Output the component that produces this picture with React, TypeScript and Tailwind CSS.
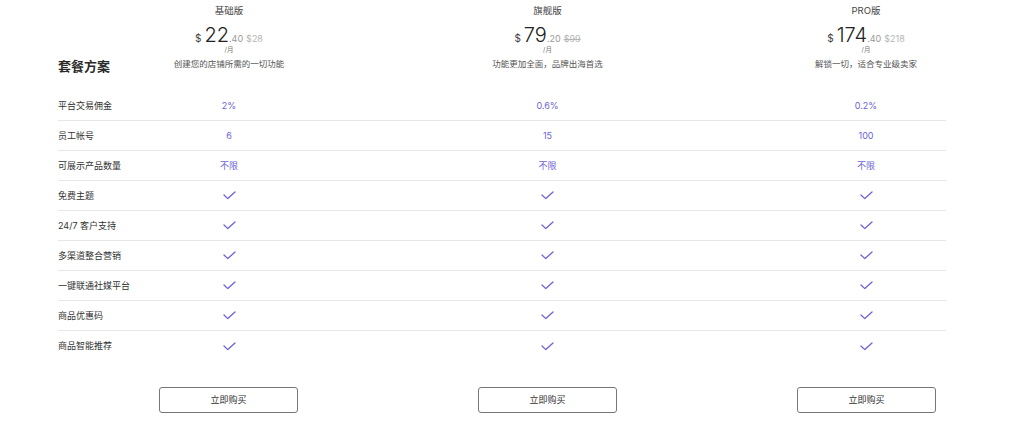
type Plan = {
  name: string;
  price: string;
  cents: string;
  was: string;
  struck: boolean;
  desc: string;
};

const plans: Plan[] = [
  { name: "基础版", price: "22", cents: ".40", was: "$28", struck: false, desc: "创建您的店铺所需的一切功能" },
  { name: "旗舰版", price: "79", cents: ".20", was: "$99", struck: true, desc: "功能更加全面，品牌出海首选" },
  { name: "PRO版", price: "174", cents: ".40", was: "$218", struck: false, desc: "解锁一切，适合专业级卖家" },
];

const rows: { label: string; values: string[] | null }[] = [
  { label: "平台交易佣金", values: ["2%", "0.6%", "0.2%"] },
  { label: "员工帐号", values: ["6", "15", "100"] },
  { label: "可展示产品数量", values: ["不限", "不限", "不限"] },
  { label: "免费主题", values: null },
  { label: "24/7 客户支持", values: null },
  { label: "多渠道整合营销", values: null },
  { label: "一键联通社媒平台", values: null },
  { label: "商品优惠码", values: null },
  { label: "商品智能推荐", values: null },
];

const font = { fontFamily: "Inter, 'Noto Sans CJK SC', sans-serif" };

const Tick = () => (
  <svg width="13" height="9" viewBox="0 0 13 9" fill="none">
    <polyline points="1,4 4.8,7.6 12,1" stroke="#6c63d8" strokeWidth="1.3" strokeLinecap="round" strokeLinejoin="round" />
  </svg>
);

const App = () => {
  return (
    <div className="w-[1024px] h-[424px] bg-white text-[#333]" style={font}>
      <div className="ml-[58px] w-[888px]">
        {/* header */}
        <div className="flex h-[91px]">
          <div className="w-[102px] pt-[57px]">
            <h2 className="text-[13px] font-semibold leading-[18px] text-[#2a2a2a]">套餐方案</h2>
          </div>
          <div className="flex-1 flex justify-between pr-[11px]">
            {plans.map((p) => (
              <div key={p.name} className="w-[138px] flex flex-col items-center pt-[5px] whitespace-nowrap">
                <div className="text-[9.5px] leading-[12px] text-[#444]">{p.name}</div>
                <div className="flex items-baseline mt-[8px] leading-[20px]">
                  <span className="text-[10px] text-[#444] mr-[3px]">$</span>
                  <span className="text-[20px] font-light text-[#222]">{p.price}</span>
                  <span className="text-[9px] text-[#999]">{p.cents}</span>
                  <span className={`text-[9px] text-[#b5b5b5] ml-[3px] ${p.struck ? "line-through" : ""}`}>{p.was}</span>
                </div>
                <div className="text-[6.5px] leading-[8px] text-[#777] -mt-[3px]">/月</div>
                <div className="text-[8.5px] leading-[12px] text-[#555] mt-[4px]">{p.desc}</div>
              </div>
            ))}
          </div>
        </div>

        {/* feature rows */}
        <div>
          {rows.map((r, i) => (
            <div
              key={r.label}
              className={`flex items-center h-[30px] ${i < rows.length - 1 ? "border-b border-[#e6e6e6]" : ""}`}
            >
              <div className="w-[102px] text-[9px] text-[#333] whitespace-nowrap">{r.label}</div>
              <div className="flex-1 flex justify-between pr-[11px]">
                {[0, 1, 2].map((c) => (
                  <div key={c} className="w-[138px] flex justify-center text-[9px] text-[#6c63d8]">
                    {r.values ? r.values[c] : <Tick />}
                  </div>
                ))}
              </div>
            </div>
          ))}
        </div>

        {/* buttons */}
        <div className="flex mt-[26px]">
          <div className="w-[101px]" />
          <div className="flex-1 flex justify-between pr-[10px]">
            {plans.map((p) => (
              <button
                key={p.name}
                type="button"
                className="w-[139px] h-[26px] border border-[#777] rounded-[3px] text-[9px] text-[#333] bg-white"
              >
                立即购买
              </button>
            ))}
          </div>
        </div>
      </div>
    </div>
  );
};

export default App;
